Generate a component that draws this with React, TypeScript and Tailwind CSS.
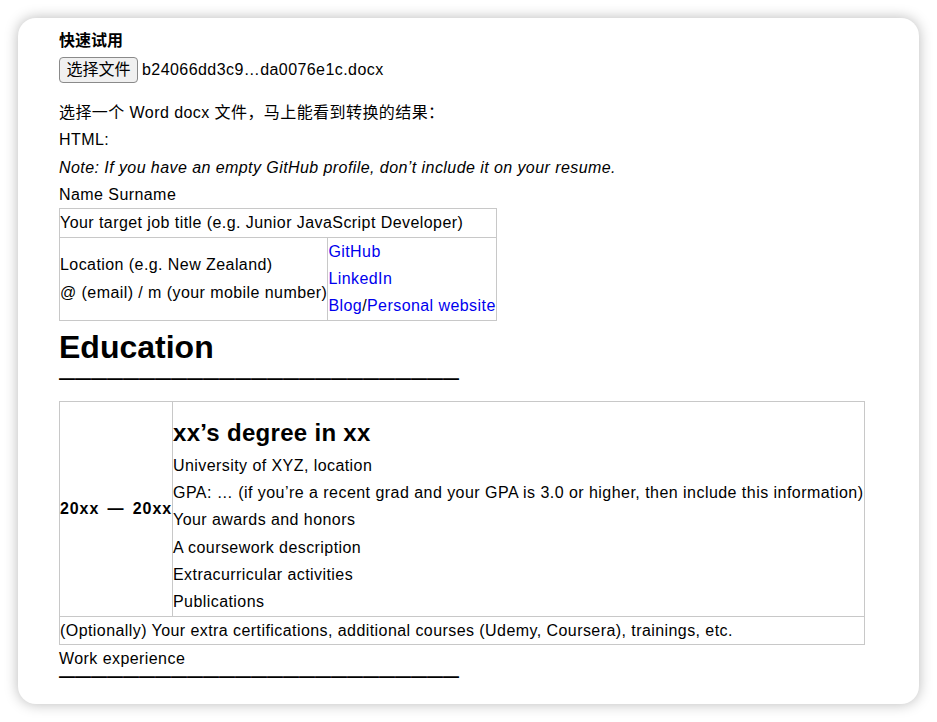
import React from "react";

const font = { fontFamily: "'Liberation Sans', 'Noto Sans CJK SC', sans-serif" };

function Dashes() {
  return (
    <p className="text-[16px] leading-[10px] h-[10px] font-bold tracking-normal whitespace-nowrap overflow-visible">
      {"—".repeat(25)}
    </p>
  );
}

const td = "border border-[#c8c8c8] p-0 align-middle";
const link = "text-[#0000ee]";

export default function App() {
  return (
    <div className="w-full h-[722px] bg-white p-[18px]" style={font}>
      <div className="h-[686px] w-[901px] bg-white rounded-[18px] shadow-[0_0_14px_rgba(0,0,0,0.28)] overflow-hidden pl-[41px] pt-[11px] text-black text-[16px] leading-[27.33px] tracking-[0.43px]">
        <div className="font-bold text-[16px] leading-[24px] tracking-normal">快速试用</div>
        <div className="flex items-center mt-[4px] h-[26px]">
          <button className="h-[26px] w-[79px] border border-[#8a8a8a] rounded-[4px] bg-[#f0f0f0] text-[16px] leading-[24px] tracking-normal text-black">
            选择文件
          </button>
          <span className="ml-[4px]">b24066dd3c9…da0076e1c.docx</span>
        </div>
        <p className="mt-[16px]">选择一个 Word docx 文件，马上能看到转换的结果：</p>
        <p>HTML:</p>
        <p className="italic">Note: If you have an empty GitHub profile, don’t include it on your resume.</p>
        <p>Name Surname</p>
        <table className="border-collapse">
          <tbody>
            <tr>
              <td className={td} colSpan={2}>
                <p>Your target job title (e.g. Junior JavaScript Developer)</p>
              </td>
            </tr>
            <tr>
              <td className={td}>
                <p>Location (e.g. New Zealand)</p>
                <p>@ (email) / m (your mobile number)</p>
              </td>
              <td className={td}>
                <p><a className={link}>GitHub</a></p>
                <p><a className={link}>LinkedIn</a></p>
                <p>
                  <a className={link}>Blog</a>/<a className={link}>Personal website</a>
                </p>
              </td>
            </tr>
          </tbody>
        </table>
        <h1 className="text-[32px] leading-[37px] font-bold tracking-normal mt-[8px]">Education</h1>
        <div className="mt-[8px]">
          <Dashes />
        </div>
        <table className="border-collapse mt-[17px]">
          <tbody>
            <tr>
              <td className={td}>
                <p className="font-bold whitespace-nowrap tracking-[0.9px]">
                  {"20xx "}
                  <span className="mx-[3px]">—</span>
                  {" 20xx"}
                </p>
              </td>
              <td className={td}>
                <h2 className="text-[24px] font-bold leading-[27px] tracking-[0.3px] pt-[17px] pb-[6px]">xx’s degree in xx</h2>
                <p>University of XYZ, location</p>
                <p className="tracking-[0.46px]">GPA: … (if you’re a recent grad and your GPA is 3.0 or higher, then include this information)</p>
                <p>Your awards and honors</p>
                <p>A coursework description</p>
                <p>Extracurricular activities</p>
                <p>Publications</p>
              </td>
            </tr>
            <tr>
              <td className={td} colSpan={2}>
                <p>(Optionally) Your extra certifications, additional courses (Udemy, Coursera), trainings, etc.</p>
              </td>
            </tr>
          </tbody>
        </table>
        <p>Work experience</p>
        <Dashes />
      </div>
    </div>
  );
}
